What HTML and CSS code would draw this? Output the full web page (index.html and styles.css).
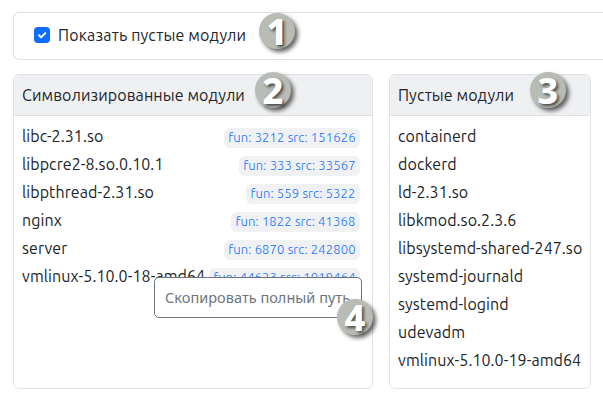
FILE: index.html
```html
<!DOCTYPE html>
<html lang="ru">
<head>
<meta charset="utf-8">
<title>Модули</title>
<link rel="stylesheet" href="styles.css">
</head>
<body>
<label class="filter"><span class="check"><svg viewBox="0 0 16 16" width="16" height="16"><path d="M5 8.3 7.1 10.4 11.3 6.1" fill="none" stroke="#fff" stroke-width="2" stroke-linecap="round" stroke-linejoin="round"/></svg></span><span>Показать пустые модули</span></label>
<main class="columns">
<section class="card wide">
<h2>Символизированные модули</h2>
<ul>
<li><span>libc-2.31.so</span><span class="badge b136">fun: 3212 src: 151626</span></li>
<li><span>libpcre2-8.so.0.10.1</span><span class="badge b121">fun: 333 src: 33567</span></li>
<li><span>libpthread-2.31.so</span><span class="badge b114">fun: 559 src: 5322</span></li>
<li><span>nginx</span><span class="badge b129">fun: 1822 src: 41368</span></li>
<li><span>server</span><span class="badge b136">fun: 6870 src: 242800</span></li>
<li><span>vmlinux-5.10.0-18-amd64</span><span class="badge b151">fun: 44623 src: 1019464</span></li>
</ul>
</section>
<section class="card narrow">
<h2>Пустые модули</h2>
<ul>
<li>containerd</li>
<li>dockerd</li>
<li>ld-2.31.so</li>
<li>libkmod.so.2.3.6</li>
<li>libsystemd-shared-247.so</li>
<li>systemd-journald</li>
<li>systemd-logind</li>
<li>udevadm</li>
<li>vmlinux-5.10.0-19-amd64</li>
</ul>
</section>
</main>
<div class="menu">Скопировать полный путь</div>
<span class="mark m1">1</span>
<span class="mark m2">2</span>
<span class="mark m3">3</span>
<span class="mark m4">4</span>
</body>
</html>
```
FILE: styles.css
```css
* { box-sizing: border-box; }
body {
  margin: 0;
  padding: 12px 0 0 13px;
  width: 603px;
  height: 404px;
  overflow: hidden;
  position: relative;
  background: #fff;
  color: #212529;
  font: 16px/28px "Ubuntu", "Noto Sans", sans-serif;
  letter-spacing: 0.08px;
  white-space: nowrap;
}
.filter {
  display: flex;
  align-items: center;
  gap: 8px;
  height: 48px;
  padding: 0 0 2px 20px;
  border: 1px solid #dee2e6;
  border-right: 0;
  border-radius: 6px 0 0 6px;
  letter-spacing: 0.15px;
}
.check {
  width: 16px;
  height: 16px;
  border-radius: 4px;
  background: #0d6efd;
}
.check svg { display: block; }
.columns { display: flex; gap: 16px; margin-top: 14px; }
.card {
  height: 315px;
  border: 1px solid #dee2e6;
  border-radius: 6px;
  overflow: hidden;
}
.wide { width: 360px; }
.narrow { width: 202px; }
h2 {
  margin: 0;
  height: 41px;
  padding: 0 8px;
  font: inherit;
  line-height: 41px;
  background: #eff0f2;
  border-bottom: 1px solid #dee2e6;
}
ul { list-style: none; margin: 0; padding: 6px 12px 0 8px; }
li { display: flex; justify-content: space-between; align-items: center; height: 28px; }
.badge {
  flex: none;
  height: 20px;
  margin-top: 3px;
  border-radius: 6px;
  background: #eff1f2;
  color: #1470fd;
  font-size: 13px;
  font-weight: 300;
  line-height: 19px;
  letter-spacing: 0.15px;
  text-align: center;
}
.b114 { width: 114px; }
.b121 { width: 121px; }
.b129 { width: 129px; }
.b136 { width: 136px; }
.b151 { width: 151px; }
.menu {
  position: absolute;
  left: 154px;
  top: 277px;
  width: 208px;
  height: 41px;
  padding-left: 10px;
  border: 1px solid #6c757d;
  border-radius: 5px;
  background: #fff;
  color: #6c757d;
  font: 14.5px/38px "Noto Sans", sans-serif;
  letter-spacing: 0.03px;
}
.mark {
  position: absolute;
  width: 36px;
  height: 36px;
  border-radius: 50%;
  background: #b8bcb5;
  box-shadow: 3px 3px 4px rgba(0, 0, 0, .6);
  color: #fff;
  font: 800 36px/37px "Noto Sans", sans-serif;
  letter-spacing: 0;
  text-align: center;
  text-shadow: 2px 2px 3px rgba(0, 0, 0, .6);
}
.m1 { left: 259px; top: 13px; }
.m2 { left: 255px; top: 72px; }
.m3 { left: 530px; top: 72px; }
.m4 { left: 337px; top: 299px; }
```
